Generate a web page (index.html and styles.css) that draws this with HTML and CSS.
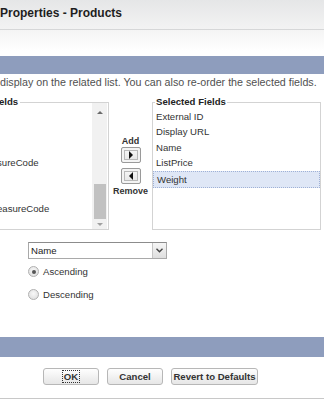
FILE: index.html
```html
<!DOCTYPE html>
<html>
<head>
<meta charset="utf-8">
<link rel="stylesheet" href="styles.css">
</head>
<body>
<div class="header"><h1 class="title">Properties - Products</h1></div>
<div class="subheader"></div>
<div class="bar"></div>
<p class="desc">display on the related list. You can also re-order the selected fields.</p>

<div class="fields">
  <fieldset class="box box-left">
    <legend class="legend">elds</legend>
    <div class="left-inner">
      <ul class="list">
        <li class="item"></li>
        <li class="item"></li>
        <li class="item"></li>
        <li class="item cut1">sureCode</li>
        <li class="item cut2">t</li>
        <li class="item"></li>
        <li class="item cut3">easureCode</li>
      </ul>
      <div class="scrollbar">
        <span class="sb-arrow sb-up"></span>
        <span class="sb-track"><span class="sb-thumb"></span></span>
        <span class="sb-arrow sb-down"></span>
      </div>
    </div>
  </fieldset>

  <div class="mover">
    <span class="mover-label">Add</span>
    <button class="arrow-btn" type="button"><svg width="6" height="8" viewBox="0 0 6 8"><path d="M1 0 L5 4 L1 8 Z" fill="#111"/></svg></button>
    <button class="arrow-btn arrow-btn-2" type="button"><svg width="6" height="8" viewBox="0 0 6 8"><path d="M5 0 L1 4 L5 8 Z" fill="#111"/></svg></button>
    <span class="mover-label mover-remove">Remove</span>
  </div>

  <fieldset class="box box-right">
    <legend class="legend legend-right">Selected Fields</legend>
    <ul class="list list-right">
      <li class="item">External ID</li>
      <li class="item">Display URL</li>
      <li class="item">Name</li>
      <li class="item">ListPrice</li>
      <li class="item item-selected">Weight</li>
    </ul>
  </fieldset>
</div>

<div class="sort">
  <div class="select">
    <span class="select-text">Name</span>
    <span class="select-btn"><svg width="7" height="5" viewBox="0 0 7 5"><path d="M0.5 0.8 L3.5 3.8 L6.5 0.8" fill="none" stroke="#444" stroke-width="1.4"/></svg></span>
  </div>
  <div class="radios">
    <label class="radio"><span class="radio-dot radio-checked"></span><span class="radio-label">Ascending</span></label>
    <label class="radio"><span class="radio-dot"></span><span class="radio-label">Descending</span></label>
  </div>
</div>

<div class="bar bar-footer"></div>
<div class="actions">
  <button class="btn btn-ok" type="button"><span class="focus">OK</span></button>
  <button class="btn btn-cancel" type="button">Cancel</button>
  <button class="btn btn-revert" type="button">Revert to Defaults</button>
</div>
</body>
</html>
```

FILE: styles.css
```css
* { box-sizing: border-box; }

html, body {
  margin: 0;
  padding: 0;
}

body {
  width: 324px;
  height: 400px;
  overflow: hidden;
  background: #fff;
  font-family: "Liberation Sans", Arial, sans-serif;
  color: #333;
}

.header {
  height: 30px;
  border-bottom: 1px solid #d6d7d8;
  background: linear-gradient(#e5e6e7, #f3f3f3);
}

.title {
  margin: 0;
  padding-top: 6px;
  font-size: 12px;
  line-height: 15px;
  font-weight: bold;
  color: #1e1e1e;
}

.subheader {
  height: 26px;
  background: linear-gradient(#f4f4f4, #ffffff 80%);
}

.bar {
  height: 18px;
  background: #8e9dbd;
}

.desc {
  margin: 0;
  height: 16px;
  font-size: 10.7px;
  line-height: 16px;
  color: #505050;
  white-space: nowrap;
}

.fields {
  margin-top: 6px;
  display: grid;
  grid-template-columns: 109px 43px 169px;
  align-items: start;
}

.box {
  margin: 0;
  padding: 0;
  border: 1px solid #d3d3d3;
  height: 134px;
  min-width: 0;
}

.box-left {
  border-left: none;
}

.legend {
  padding: 0 2px 0 0;
  margin-left: -1px;
  font-size: 9.6px;
  line-height: 12px;
  font-weight: bold;
  color: #222;
}

.legend-right {
  margin-left: 2px;
  padding: 0 1px;
}

.left-inner {
  display: flex;
  height: 100%;
}

.list {
  list-style: none;
  margin: 0;
  padding: 1px 0 0 0;
  flex: 1;
  min-width: 0;
  overflow: hidden;
}

.item {
  height: 15.4px;
  line-height: 15.4px;
  font-size: 9.6px;
  color: #333;
  white-space: nowrap;
  padding-left: 3px;
}

.box-left .item {
  padding-left: 0;
}

.cut1 { text-indent: -3px; }
.cut2 { text-indent: -3px; color: #6cc6ee; }
.cut3 { text-indent: -3px; }

.item-selected {
  height: 17px;
  line-height: 15px;
  background: #dfe7f6;
  border: 1px dotted #9fb1d6;
  padding-left: 3px;
}

.scrollbar {
  width: 15px;
  margin-right: 1px;
  margin-top: -5px;
  display: flex;
  flex-direction: column;
  background: #f1f1f1;
  padding-top: 8px;
}

.sb-arrow {
  display: block;
  width: 0;
  height: 0;
  margin: 0 auto;
  border-left: 3px solid transparent;
  border-right: 3px solid transparent;
}

.sb-up {
  border-bottom: 3px solid #6a6a6a;
}

.sb-down {
  border-top: 3px solid #a0a0a0;
  margin-bottom: 3px;
}

.sb-track {
  flex: 1;
  display: flex;
  flex-direction: column;
  justify-content: flex-end;
  padding: 0 1px 4px 2px;
}

.sb-thumb {
  display: block;
  height: 35px;
  background: #c1c1c1;
}

.mover {
  display: flex;
  flex-direction: column;
  align-items: center;
  padding-top: 39px;
}

.mover-label {
  font-size: 9px;
  line-height: 12px;
  font-weight: bold;
  color: #333;
}

.mover-remove {
  margin-top: 1px;
}

.arrow-btn {
  width: 20px;
  height: 16px;
  margin-top: 0;
  padding: 0;
  border: 1px solid #9a9a9a;
  border-radius: 2px;
  background: linear-gradient(#fafafa, #e3e3e3);
  display: flex;
  align-items: center;
  justify-content: center;
  box-shadow: inset 0 0 0 2px #f4f4f4, inset 0 0 0 3px #b9b9b9;
}

.arrow-btn-2 {
  margin-top: 5px;
}

.sort {
  margin-top: 12px;
  padding-left: 28px;
}

.select {
  width: 139px;
  height: 17px;
  border: 1px solid #a9a9a9;
  border-top-color: #8c8c8c;
  display: flex;
  background: #fff;
}

.select-text {
  flex: 1;
  font-size: 9.6px;
  line-height: 15px;
  padding-left: 2px;
  color: #222;
}

.select-btn {
  width: 14px;
  border-left: 1px solid #c5c5c5;
  background: linear-gradient(#f6f6f6, #dedede);
  display: flex;
  align-items: center;
  justify-content: center;
}

.radios {
  margin-top: 1px;
}

.radio {
  display: flex;
  align-items: center;
  height: 23px;
}

.radio-dot {
  width: 11px;
  height: 11px;
  border-radius: 50%;
  border: 1px solid #b0b0b0;
  background: radial-gradient(circle at 50% 40%, #f8f8f8, #dadada);
  display: flex;
  align-items: center;
  justify-content: center;
}

.radio-checked::after {
  content: "";
  width: 4px;
  height: 4px;
  border-radius: 50%;
  background: #555;
}

.radio-label {
  margin-left: 4px;
  font-size: 9.6px;
  color: #333;
}

.bar-footer {
  margin-top: 31px;
  height: 20px;
}

.actions {
  height: 42px;
  border-bottom: 1px solid #c8c8c8;
  padding-top: 11px;
  padding-left: 43px;
  display: flex;
  gap: 8px;
  align-items: flex-start;
}

.btn {
  height: 17px;
  padding: 0;
  border: 1px solid #b7b7b7;
  border-radius: 3px;
  background: linear-gradient(#fefefe, #e6e6e6);
  font-family: "Liberation Sans", Arial, sans-serif;
  font-size: 9.6px;
  font-weight: bold;
  color: #333;
  display: flex;
  align-items: center;
  justify-content: center;
}

.btn-ok { width: 56px; }
.btn-cancel { width: 56px; }
.btn-revert { width: 87px; }

.focus {
  outline: 1px dotted #333;
  padding: 0 1px;
  line-height: 11px;
}
```
